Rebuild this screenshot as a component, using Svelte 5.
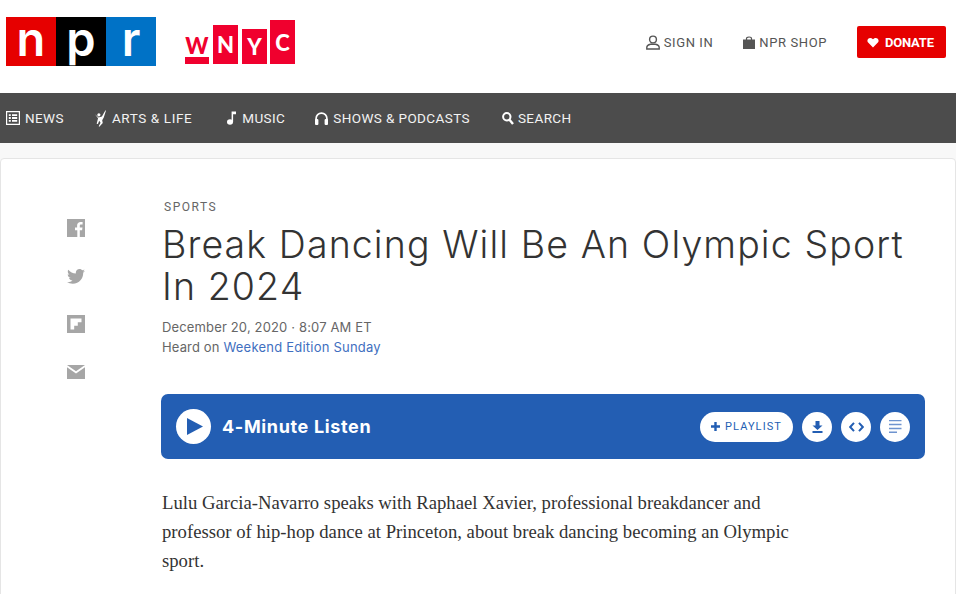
<script>
	const navItems = [
		{ label: 'NEWS', icon: 'news' },
		{ label: 'ARTS & LIFE', icon: 'arts' },
		{ label: 'MUSIC', icon: 'music' },
		{ label: 'SHOWS & PODCASTS', icon: 'shows' },
		{ label: 'SEARCH', icon: 'search' }
	];
</script>

<div class="page">
	<header class="top">
		<div class="npr-logo">
			<span class="red">n</span>
			<span class="black">p</span>
			<span class="blue">r</span>
		</div>
		<div class="wnyc-logo">
			<span class="w">W</span>
			<span class="box n">N</span>
			<span class="box y">Y</span>
			<span class="box c">C</span>
		</div>
		<div class="top-links">
			<a class="signin">
				<svg width="14" height="15" viewBox="0 0 14 15"><circle cx="7" cy="4.5" r="3.4" fill="none" stroke="#555" stroke-width="1.4" /><path d="M.8 14v-1.5C.8 10.500 2.500 9.600 4.500 9.200h5c2 .4 3.700 1.300 3.700 3.300V14z" fill="none" stroke="#555" stroke-width="1.4" /></svg>
				SIGN IN
			</a>
			<a class="shop">
				<svg width="12" height="13" viewBox="0 0 12 13"><path d="M0 3.500h12V13H0z" fill="#555" /><path d="M3.500 4V2.500C3.500.5 8.500.5 8.500 2.500V4" fill="none" stroke="#555" stroke-width="1.200" /></svg>
				NPR SHOP
			</a>
			<a class="donate">
				<svg width="12" height="11" viewBox="0 0 12 11"><path d="M6 10.500.9 5.300C-1 2.500 2.800-1 6 2.200 9.200-1 13 2.500 11.100 5.300z" fill="#fff" /></svg>
				DONATE
			</a>
		</div>
	</header>

	<nav class="nav">
		{#each navItems as item}
			<a class={item.icon}>
				{#if item.icon === 'news'}
					<svg width="14" height="14" viewBox="0 0 14 14"><path fill-rule="evenodd" fill="#fff" d="M0 0h14v14H0zM1.200 1.200v11.600h11.600V1.200z" /><path fill="#fff" d="M2.800 3.200h2v1.800h-2zM6 3.200h5.200v1.800H6zM2.800 6.100h2v1.800h-2zM6 6.100h5.200v1.800H6zM2.800 9h2v1.800h-2zM6 9h5.200v1.800H6z" /></svg>
				{:else if item.icon === 'arts'}
					<svg width="12" height="17" viewBox="0 0 13 18"><circle cx="4.200" cy="5" r="1.700" fill="#fff" /><path fill="#fff" d="M0 4.500 3.800 7.800 7.500 6.800 11 0.500 12 0 9.500 8 7.800 11 8.400 14 4.700 18 4 17.500 6 13.500 4.500 11.500 3.200 15 1.800 14.800 3.300 8.800z" /></svg>
				{:else if item.icon === 'music'}
					<svg width="9" height="14" viewBox="0 0 9 14"><ellipse cx="3" cy="11" rx="3" ry="2.700" fill="#fff" /><path fill="#fff" d="M4.600 11V.4H9v2.800H6.100V11z" /></svg>
				{:else if item.icon === 'shows'}
					<svg width="13" height="13" viewBox="0 0 13 13"><path d="M1.100 8V6.500a5.400 5.400 0 0 1 10.800 0V8" fill="none" stroke="#fff" stroke-width="1.700" /><rect x="0" y="7" width="3.400" height="6" rx="1" fill="#fff" /><rect x="9.600" y="7" width="3.400" height="6" rx="1" fill="#fff" /></svg>
				{:else}
					<svg width="12" height="13" viewBox="0 0 12 13"><circle cx="4.800" cy="4.800" r="3.700" fill="none" stroke="#fff" stroke-width="2" /><path d="M7.500 7.800 11 12" stroke="#fff" stroke-width="2.400" /></svg>
				{/if}
				{item.label}
			</a>
		{/each}
	</nav>

	<main class="card">
		<aside class="share">
			<svg width="18" height="18" viewBox="0 0 18 18"><path fill="#a6a6a6" d="M0 0h18v18h-5.200v-6.800h2.300l.4-2.700h-2.700V6.800c0-.8.300-1.300 1.400-1.300h1.400V3.100c-.3 0-1.100-.1-2-.1-2.100 0-3.500 1.300-3.500 3.500v2H8v2.700h2.300V18H0z" /></svg>
			<svg width="18" height="15" viewBox="0 0 18 15"><path fill="#a6a6a6" d="M18 1.800c-.7.300-1.400.5-2.100.6.800-.5 1.300-1.200 1.600-2-.7.400-1.500.7-2.300.9C14.500.5 13.600 0 12.500 0 10.500 0 8.800 1.700 8.800 3.700c0 .3 0 .6.100.9C5.800 4.400 3.100 2.900 1.300.7.900 1.200.8 1.900.8 2.600c0 1.300.6 2.400 1.600 3.100-.6 0-1.200-.2-1.700-.5 0 1.800 1.300 3.300 3 3.700-.6.100-1.100.2-1.700.1.500 1.500 1.800 2.500 3.500 2.600C4 12.700 2 13.400 0 13.100 1.600 14.200 3.600 14.800 5.700 14.800c6.800 0 10.500-5.600 10.500-10.500v-.5c.7-.5 1.300-1.200 1.800-2z" /></svg>
			<svg width="18" height="18" viewBox="0 0 18 18"><path fill-rule="evenodd" fill="#a6a6a6" d="M0 0h18v18H0zM3.500 3.500v11h3.700V10.800h3.600V7.200h3.700V3.500z" /></svg>
			<svg width="18" height="14" viewBox="0 0 18 14"><path fill="#a6a6a6" d="M0 0h18L9 6.200zM0 2.200 9 8.600l9-6.400V14H0z" /></svg>
		</aside>

		<article class="story">
			<div class="slug">SPORTS</div>
			<h1>Break Dancing Will Be An Olympic Sport In 2024</h1>
			<div class="meta">December 20, 2020 · 8:07 AM ET</div>
			<div class="meta">Heard on <a>Weekend Edition Sunday</a></div>

			<div class="player">
				<span class="play">
					<svg width="16" height="17" viewBox="0 0 16 17"><path d="M0 0 16 8.500 0 17z" fill="#235eb3" /></svg>
				</span>
				<span class="listen">4-Minute Listen</span>
				<span class="actions">
					<span class="pill">
						<svg width="9" height="9" viewBox="0 0 9 9"><path d="M3.300 0h2.400v3.300H9v2.400H5.700V9H3.300V5.700H0V3.300h3.300z" fill="#235eb3" /></svg>
						PLAYLIST
					</span>
					<span class="round">
						<svg width="11" height="12" viewBox="0 0 11 12"><path d="M3.500 0h4v4.500h3L5.500 9 .5 4.500h3zM.5 10h10v2H.5z" fill="#235eb3" /></svg>
					</span>
					<span class="round">
						<svg width="15" height="10" viewBox="0 0 15 10"><path d="M5 .8 1.200 5 5 9.200M10 .8 13.800 5 10 9.200" fill="none" stroke="#235eb3" stroke-width="2" /></svg>
					</span>
					<span class="round">
						<svg width="13" height="13" viewBox="0 0 13 13"><path d="M0 .5h12.500M0 4.500h12.500M0 8.500h12.500M0 12.300h8" stroke="#6f94cf" stroke-width="1.500" /></svg>
					</span>
				</span>
			</div>

			<p class="teaser">
				Lulu Garcia-Navarro speaks with Raphael Xavier, professional breakdancer and professor of
				hip-hop dance at Princeton, about break dancing becoming an Olympic sport.
			</p>
		</article>
	</main>
</div>

<style>
	:global(body) {
		margin: 0;
		background: #f8f8f8;
		overflow: hidden;
	}

	.page {
		width: 956px;
		height: 594px;
		overflow: hidden;
		font-family: Roboto, sans-serif;
	}

	.top {
		height: 93px;
		background: #fff;
		display: flex;
		align-items: flex-start;
		padding: 17px 10px 0 6px;
		box-sizing: border-box;
	}

	.npr-logo {
		display: flex;
		height: 49px;
	}

	.npr-logo span {
		width: 50px;
		height: 49px;
		color: #fff;
		font: 600 47px/43px Inter, sans-serif;
		text-align: center;
	}

	.red {
		background: #e60000;
	}
	.black {
		background: #000;
	}
	.blue {
		background: #0072c6;
	}

	.wnyc-logo {
		display: flex;
		align-items: flex-end;
		gap: 4px;
		height: 44px;
		margin: 3px 0 0 29px;
	}

	.wnyc-logo span {
		width: 25px;
		color: #fff;
		font: 900 22px/1 Lato, sans-serif;
		text-align: center;
		background: #f0002e;
		display: flex;
		align-items: center;
		justify-content: center;
	}

	.wnyc-logo .w {
		width: 24px;
		background: none;
		color: #f0002e;
		height: 28px;
		font-size: 22px;
		align-items: flex-start;
		border-bottom: 7px solid #f0002e;
		box-sizing: border-box;
		line-height: 20px;
	}

	.wnyc-logo .n {
		height: 39px;
	}
	.wnyc-logo .y {
		height: 35px;
	}
	.wnyc-logo .c {
		height: 44px;
		margin-left: -1px;
		padding-top: 2px;
		box-sizing: border-box;
	}

	.top-links {
		margin-left: auto;
		display: flex;
		align-items: center;
		height: 32px;
		margin-top: 9px;
		font-size: 13px;
		letter-spacing: 0.6px;
		color: #555;
	}

	.top-links a {
		display: flex;
		align-items: center;
		gap: 4px;
	}

	.signin {
		margin-right: 30px;
	}

	.shop {
		margin-right: 30px;
	}

	.donate {
		background: #e60000;
		color: #fff;
		font-weight: 700;
		height: 32px;
		width: 89px;
		box-sizing: border-box;
		padding-left: 10px;
		gap: 6px !important;
		border-radius: 2px;
		letter-spacing: -0.2px;
	}

	.nav {
		height: 50px;
		background: #4c4c4c;
		display: flex;
		align-items: center;
		padding-left: 6px;
		gap: 31px;
		color: #f2f2f2;
		font-size: 13.5px;
		letter-spacing: 0.4px;
	}

	.nav a {
		display: flex;
		align-items: center;
		gap: 5px;
	}

	.nav .arts {
		letter-spacing: 0.6px;
	}

	.nav .music {
		margin-left: 4px;
		gap: 6px;
	}

	.nav .shows {
		margin-left: -1px;
	}

	.nav .search {
		margin-left: 1px;
		gap: 4px;
	}

	.card {
		margin-top: 15px;
		background: #fff;
		border: 1px solid #e5e5e5;
		border-radius: 4px;
		height: 500px;
		display: flex;
		box-sizing: border-box;
	}

	.share {
		width: 150px;
		flex: none;
		display: grid;
		grid-auto-rows: 48px;
		place-items: center;
		align-content: start;
		padding-top: 45px;
		box-sizing: border-box;
	}

	.story {
		margin-left: 10px;
		width: 764px;
	}

	.slug {
		margin-top: 41px;
		margin-left: 3px;
		font-size: 12px;
		letter-spacing: 1.500px;
		color: #666;
		line-height: 14px;
	}

	h1 {
		margin: 10px 0 0 1px;
		font: 300 37.5px/42px Inter, sans-serif;
		letter-spacing: 1.100px;
		color: #333;
		width: 755px;
	}

	.meta {
		font: 400 13px/20px Inter, sans-serif;
		letter-spacing: 0.15px;
		color: #666;
		margin-left: 1px;
	}

	h1 + .meta {
		margin-top: 9px;
	}

	.meta a {
		color: #3f6fc0;
		letter-spacing: 0.22px;
	}

	.player {
		margin-top: 37px;
		height: 65px;
		background: #235eb3;
		border-radius: 7px;
		display: flex;
		align-items: center;
		padding: 0 15px;
		box-sizing: border-box;
		color: #fff;
	}

	.play {
		width: 35px;
		height: 35px;
		border-radius: 50%;
		background: #fff;
		display: flex;
		align-items: center;
		justify-content: center;
		padding-left: 3px;
		box-sizing: border-box;
	}

	.listen {
		margin-left: 11px;
		font: 700 18px Inter, sans-serif;
		letter-spacing: 0.65px;
	}

	.actions {
		margin-left: auto;
		display: flex;
		gap: 9px;
	}

	.pill {
		width: 93px;
		height: 30px;
		border-radius: 15px;
		background: #fff;
		color: #235eb3;
		display: flex;
		align-items: center;
		justify-content: center;
		gap: 5px;
		font-size: 11px;
		font-weight: 400;
		letter-spacing: 1.100px;
	}

	.round {
		width: 30px;
		height: 30px;
		border-radius: 50%;
		background: #fff;
		display: flex;
		align-items: center;
		justify-content: center;
	}

	.teaser {
		margin: 29px 0 0 1px;
		width: 640px;
		font: 400 18.7px/29px 'Liberation Serif', serif;
		color: #333;
	}
</style>
